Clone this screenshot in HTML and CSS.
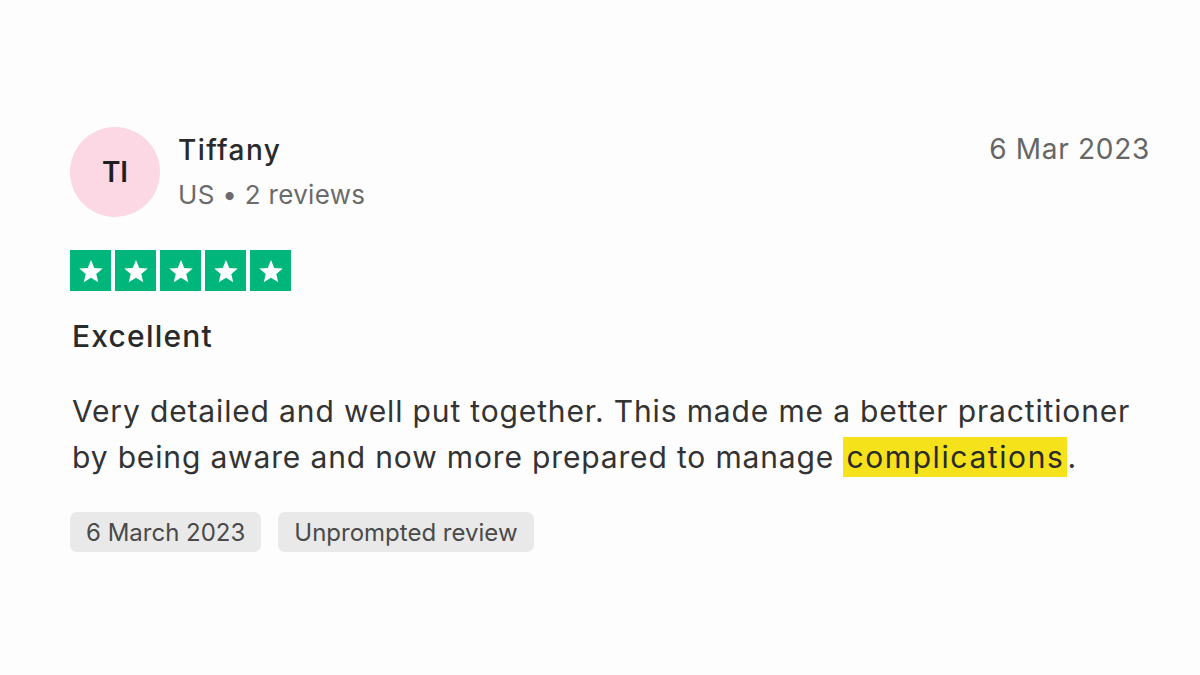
FILE: index.html
```html
<!DOCTYPE html>
<html lang="en">
<head>
<meta charset="utf-8">
<title>Review</title>
<link rel="stylesheet" href="styles.css">
</head>
<body>
<article class="review">
  <header class="review-head">
    <div class="avatar">TI</div>
    <div class="author">
      <div class="author-name">Tiffany</div>
      <div class="author-meta">US • 2 reviews</div>
    </div>
    <time class="head-date">6 Mar 2023</time>
  </header>
  <div class="stars">
    <span class="star"><svg viewBox="0 0 24 24"><path d="M12 3.2l2.6 6.3 6.8.5-5.2 4.4 1.6 6.6L12 17.4 6.2 21l1.6-6.6L2.6 10l6.8-.5z"/></svg></span>
    <span class="star"><svg viewBox="0 0 24 24"><path d="M12 3.2l2.6 6.3 6.8.5-5.2 4.4 1.6 6.6L12 17.4 6.2 21l1.6-6.6L2.6 10l6.8-.5z"/></svg></span>
    <span class="star"><svg viewBox="0 0 24 24"><path d="M12 3.2l2.6 6.3 6.8.5-5.2 4.4 1.6 6.6L12 17.4 6.2 21l1.6-6.6L2.6 10l6.8-.5z"/></svg></span>
    <span class="star"><svg viewBox="0 0 24 24"><path d="M12 3.2l2.6 6.3 6.8.5-5.2 4.4 1.6 6.6L12 17.4 6.2 21l1.6-6.6L2.6 10l6.8-.5z"/></svg></span>
    <span class="star"><svg viewBox="0 0 24 24"><path d="M12 3.2l2.6 6.3 6.8.5-5.2 4.4 1.6 6.6L12 17.4 6.2 21l1.6-6.6L2.6 10l6.8-.5z"/></svg></span>
  </div>
  <h2 class="review-title">Excellent</h2>
  <p class="review-body">Very detailed and well put together. This made me a better practitioner by being aware and now more prepared to manage <mark class="hl">complications</mark>.</p>
  <div class="tags">
    <span class="tag">6 March 2023</span>
    <span class="tag">Unprompted review</span>
  </div>
</article>
</body>
</html>
```
FILE: styles.css
```css
html, body {
  margin: 0;
  padding: 0;
  background: #fdfdfd;
}
body {
  font-family: Inter, "Open Sans", sans-serif;
  color: #2b2b2b;
}
.review {
  padding: 127px 50px 0 70px;
}
.review-head {
  display: flex;
  align-items: flex-start;
}
.avatar {
  width: 90px;
  height: 90px;
  border-radius: 50%;
  background: #fbd8e3;
  display: flex;
  align-items: center;
  justify-content: center;
  font-size: 28px;
  font-weight: 600;
  color: #1f1f1f;
  flex: none;
}
.author {
  margin-left: 18px;
  padding-top: 3px;
}
.author-name {
  font-size: 28px;
  font-weight: 500;
  line-height: 40px;
  letter-spacing: 1.4px;
  color: #2a2a2a;
}
.author-meta {
  font-size: 26px;
  line-height: 40px;
  margin-top: 5px;
  letter-spacing: 0.3px;
  color: #6b6b6b;
}
.head-date {
  margin-left: auto;
  font-size: 28px;
  line-height: 40px;
  padding-top: 2px;
  letter-spacing: 0.7px;
  color: #666;
}
.stars {
  display: flex;
  gap: 4px;
  margin-top: 33px;
}
.star {
  width: 41px;
  height: 41px;
  background: #00b67a;
  display: flex;
  align-items: center;
  justify-content: center;
}
.star svg {
  width: 30px;
  height: 30px;
  fill: #fff;
}
.review-title {
  margin: 25px 0 0 2px;
  font-size: 30px;
  font-weight: 500;
  line-height: 40px;
  letter-spacing: 1.2px;
  color: #2a2a2a;
}
.review-body {
  margin: 32px 0 0 2px;
  font-size: 30px;
  line-height: 46px;
  letter-spacing: 0.85px;
  color: #333;
  max-width: 1085px;
}
.hl {
  background: #f5e21a;
  color: #2a2a2a;
  margin: 0 3px;
  letter-spacing: 1.6px;
  box-shadow: 3px 2px 0 #f5e21a, -3px -2px 0 #f5e21a, 3px -2px 0 #f5e21a, -3px 2px 0 #f5e21a;
}
.tags {
  display: flex;
  gap: 17px;
  margin-top: 32px;
}
.tag {
  background: #e9e9e9;
  border-radius: 7px;
  height: 40px;
  padding: 0 16px;
  display: flex;
  align-items: center;
  font-size: 24px;
  color: #4a4a4a;
}
```
